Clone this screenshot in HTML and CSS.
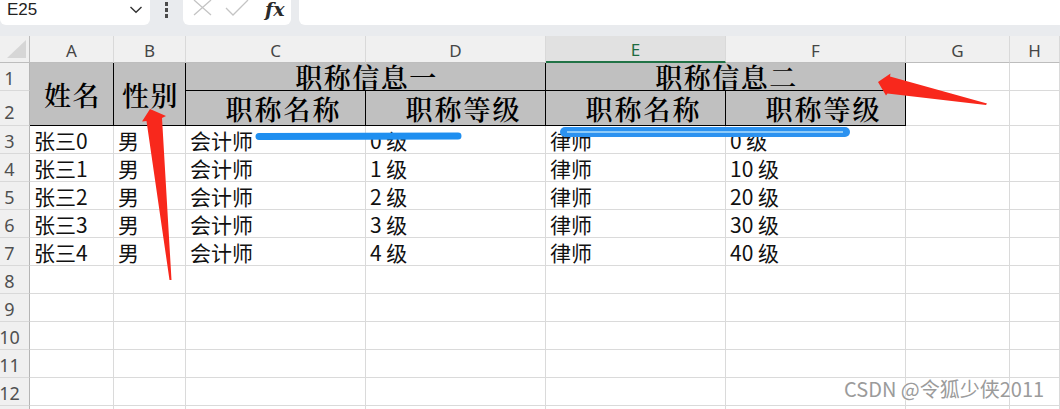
FILE: index.html
```html
<!DOCTYPE html>
<html lang="zh-CN">
<head>
<meta charset="utf-8">
<title>Sheet</title>
<link rel="stylesheet" href="styles.css">
</head>
<body>
<div class="toolbar">
  <div class="namebox">
    <span class="ref">E25</span>
    <svg class="chev" width="14" height="9" viewBox="0 0 14 9"><path d="M1.5 2 L7 7.2 L12.5 2" fill="none" stroke="#333" stroke-width="1.4"/></svg>
  </div>
  <div class="dots"><i></i><i></i><i></i></div>
  <div class="fxbox">
    <svg class="ico" width="19" height="16" viewBox="0 0 19 16"><path d="M1 0 L18 15 M18 0 L1 15" fill="none" stroke="#c4c4c4" stroke-width="1.3"/></svg>
    <svg class="ico" width="24" height="16" viewBox="0 0 24 16"><path d="M1 8 L8 15 L23 0" fill="none" stroke="#c4c4c4" stroke-width="1.3"/></svg>
    <span class="fx">fx</span>
  </div>
  <div class="formula"></div>
</div>

<div class="sheet">
  <div class="corner"><span class="tri"></span></div>
  <div class="ch">A</div>
  <div class="ch">B</div>
  <div class="ch">C</div>
  <div class="ch">D</div>
  <div class="ch sel">E</div>
  <div class="ch">F</div>
  <div class="ch">G</div>
  <div class="ch">H</div>

  <div class="rh">1</div>
  <div class="h tall">姓名</div>
  <div class="h tall">性别</div>
  <div class="h wide">职称信息一</div>
  <div class="h wide">职称信息二</div>
  <div class="c"></div>
  <div class="c"></div>

  <div class="rh r2">2</div>
  <div class="h sub">职称名称</div>
  <div class="h sub">职称等级</div>
  <div class="h sub">职称名称</div>
  <div class="h sub">职称等级</div>
  <div class="c"></div>
  <div class="c"></div>

  <div class="rh">3</div><div class="c">张三0</div><div class="c">男</div><div class="c">会计师</div><div class="c">0 级</div><div class="c">律师</div><div class="c">0 级</div><div class="c"></div><div class="c"></div>
  <div class="rh">4</div><div class="c">张三1</div><div class="c">男</div><div class="c">会计师</div><div class="c">1 级</div><div class="c">律师</div><div class="c">10 级</div><div class="c"></div><div class="c"></div>
  <div class="rh">5</div><div class="c">张三2</div><div class="c">男</div><div class="c">会计师</div><div class="c">2 级</div><div class="c">律师</div><div class="c">20 级</div><div class="c"></div><div class="c"></div>
  <div class="rh">6</div><div class="c">张三3</div><div class="c">男</div><div class="c">会计师</div><div class="c">3 级</div><div class="c">律师</div><div class="c">30 级</div><div class="c"></div><div class="c"></div>
  <div class="rh">7</div><div class="c">张三4</div><div class="c">男</div><div class="c">会计师</div><div class="c">4 级</div><div class="c">律师</div><div class="c">40 级</div><div class="c"></div><div class="c"></div>
  <div class="rh">8</div><div class="c"></div><div class="c"></div><div class="c"></div><div class="c"></div><div class="c"></div><div class="c"></div><div class="c"></div><div class="c"></div>
  <div class="rh">9</div><div class="c"></div><div class="c"></div><div class="c"></div><div class="c"></div><div class="c"></div><div class="c"></div><div class="c"></div><div class="c"></div>
  <div class="rh">10</div><div class="c"></div><div class="c"></div><div class="c"></div><div class="c"></div><div class="c"></div><div class="c"></div><div class="c"></div><div class="c"></div>
  <div class="rh">11</div><div class="c"></div><div class="c"></div><div class="c"></div><div class="c"></div><div class="c"></div><div class="c"></div><div class="c"></div><div class="c"></div>
  <div class="rh">12</div><div class="c"></div><div class="c"></div><div class="c"></div><div class="c"></div><div class="c"></div><div class="c"></div><div class="c"></div><div class="c"></div>
  <div class="rh"></div><div class="c"></div><div class="c"></div><div class="c"></div><div class="c"></div><div class="c"></div><div class="c"></div><div class="c"></div><div class="c"></div>
</div>

<svg class="marks" width="1060" height="409" viewBox="0 0 1060 409">
  <polygon points="150,109 166,116 162,118 171.5,280 169.5,280 146.5,121 142,121.5" fill="#f8281c"/>
  <polygon points="878,82 890.5,73.5 890,76.5 987,103.5 986,105 887.5,93.5 886,95.5" fill="#f8281c"/>
  <line x1="259" y1="136.5" x2="458" y2="136" stroke="#1f8ff0" stroke-width="7" stroke-linecap="round"/>
  <rect x="560" y="127" width="290" height="10" rx="5" fill="#2c92f0"/>
  <line x1="567" y1="132" x2="843" y2="132" stroke="#8fcbf8" stroke-width="2"/>
</svg>

<div class="watermark">CSDN @令狐少侠2011</div>
</body>
</html>
```

FILE: styles.css
```css
* { box-sizing: border-box; }
html, body { margin: 0; padding: 0; }
body {
  width: 1060px;
  height: 409px;
  overflow: hidden;
  background: #ffffff;
  position: relative;
  font-family: "Noto Sans CJK SC", "Noto Sans", sans-serif;
  color: #111;
}

/* ---------- toolbar ---------- */
.toolbar {
  height: 36px;
  background: #e9ebee;
  display: flex;
  align-items: flex-start;
}
.namebox {
  width: 150px;
  height: 25px;
  background: #fff;
  border-radius: 0 0 6px 6px;
  display: flex;
  align-items: flex-start;
  justify-content: space-between;
  padding: 1px 7px 0 7px;
}
.ref {
  font-family: "Liberation Sans", "Noto Sans", sans-serif;
  font-size: 17px;
  line-height: 17px;
  color: #222;
}
.chev { margin-top: 4px; }
.dots {
  width: 33px;
  display: flex;
  flex-direction: column;
  align-items: center;
  gap: 2.5px;
  padding-top: 2px;
}
.dots i {
  display: block;
  width: 3px;
  height: 3.5px;
  background: #4a4a4a;
}
.fxbox {
  width: 108px;
  height: 25px;
  background: #fff;
  border-radius: 0 0 6px 6px;
  display: flex;
  align-items: flex-start;
  padding-left: 10px;
  gap: 13px;
}
.fx {
  font-family: "DejaVu Serif", "Liberation Serif", serif;
  font-style: italic;
  font-weight: 600;
  font-size: 19px;
  line-height: 19px;
  color: #2a2a2a;
  margin-left: 3px;
  margin-top: 0;
}
.formula {
  flex: 1;
  margin-left: 8px;
  height: 25px;
  background: #fff;
  border-radius: 0 0 0 6px;
}

/* ---------- sheet ---------- */
.sheet {
  display: grid;
  grid-template-columns: 30px 84px 72px 180px 180px 180px 180px 104px 1fr;
  grid-template-rows: 27px 28px 35px repeat(11, 28px);
}
.corner {
  background: #f0f0f0;
  border-right: 1px solid #bdbdbd;
  border-bottom: 1px solid #bdbdbd;
  position: relative;
}
.tri {
  position: absolute;
  right: 3px;
  bottom: 4px;
  width: 0;
  height: 0;
  border-left: 19px solid transparent;
  border-bottom: 18px solid #d6d6d6;
}
.ch {
  background: #f0f0f0;
  border-right: 1px solid #d9d9d9;
  border-bottom: 1px solid #bdbdbd;
  font-family: "Noto Sans", "Liberation Sans", sans-serif;
  font-size: 17px;
  color: #454545;
  display: flex;
  align-items: center;
  justify-content: center;
  padding-top: 2px;
}
.ch.sel {
  background: #e1e1e1;
  color: #1d6b40;
  border-bottom: 2px solid #217346;
}
.rh {
  background: #f0f0f0;
  border-right: 1px solid #b5b5b5;
  border-bottom: 1px solid #d9d9d9;
  font-family: "Noto Sans", "Liberation Sans", sans-serif;
  font-size: 18px;
  color: #505050;
  text-align: center;
  padding-right: 10px;
  display: flex;
  align-items: center;
  justify-content: center;
  padding-top: 3px;
  white-space: nowrap;
}
.rh.r2 { padding-top: 8px; }

.c {
  border-right: 1px solid #dadada;
  border-bottom: 1px solid #dadada;
  font-size: 21px;
  line-height: 21px;
  padding: 4px 0 0 4px;
  white-space: nowrap;
  color: #111;
}

/* header block */
.h {
  background: #c0c0c0;
  border-right: 1px solid #000;
  border-bottom: 1px solid #000;
  font-family: "Noto Serif CJK SC", "Noto Sans CJK SC", serif;
  font-weight: 600;
  font-size: 27px;
  line-height: 27px;
  letter-spacing: 1.5px;
  color: #000;
  display: flex;
  justify-content: center;
  white-space: nowrap;
  padding-left: 2px;
}
.h.tall {
  grid-row: span 2;
  align-items: center;
}
.h.wide {
  grid-column: span 2;
  align-items: flex-end;
  padding-bottom: 0;
}
.h.sub {
  align-items: flex-end;
  padding-bottom: 3px;
  padding-left: 16px;
  letter-spacing: 2px;
}

/* annotations */
.marks {
  position: absolute;
  left: 0;
  top: 0;
  pointer-events: none;
}
.watermark {
  position: absolute;
  left: 844px;
  top: 377px;
  font-family: "Noto Sans CJK SC", "Noto Sans", sans-serif;
  font-size: 20px;
  line-height: 24px;
  color: #9b9b9b;
  white-space: nowrap;
  text-shadow: 0 0 1px #fff, 0 0 1px #fff, 0 0 2px #fff;
}
```
